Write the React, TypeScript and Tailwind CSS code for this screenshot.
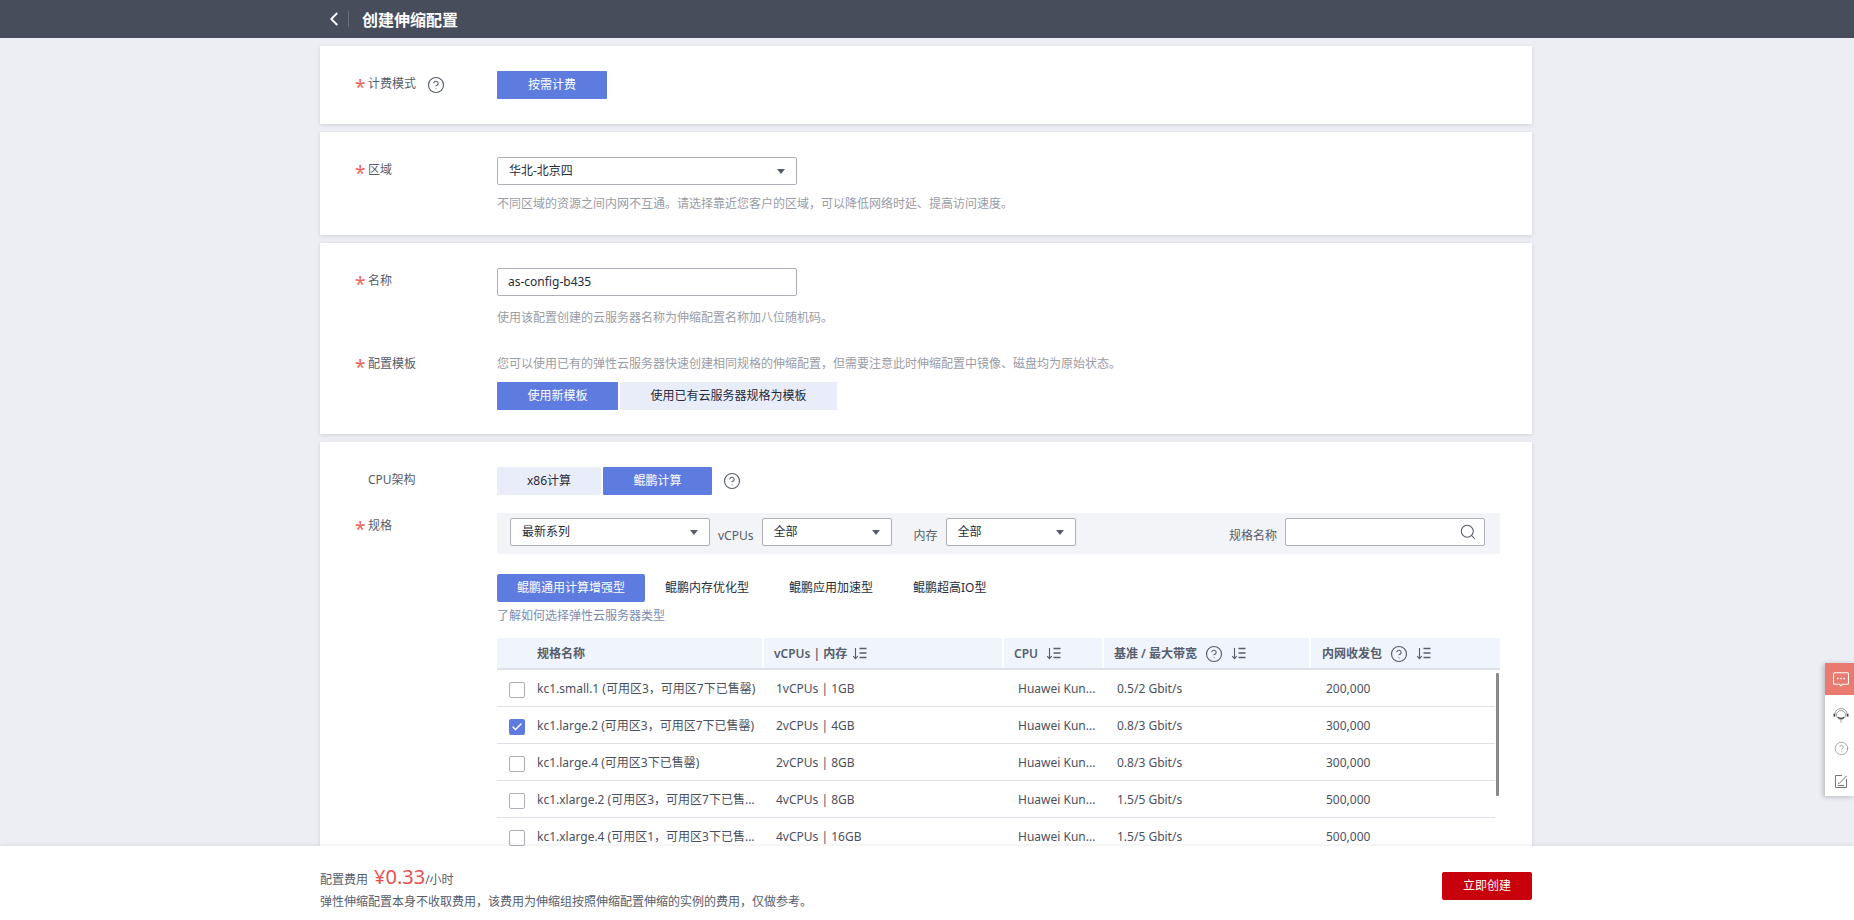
import { ChevronLeft, CircleHelp, Search, Check } from "lucide-react";
import type { ReactNode } from "react";

const Star = () => <span className="w-3 text-[#f4625c] text-[19px] leading-none shrink-0 pt-[7px] -ml-px">*</span>;

function Label({ text, required = true, children }: { text: string; required?: boolean; children?: ReactNode }) {
  return (
    <div className="w-[177px] shrink-0 pl-9 flex items-center h-7 pb-[2px] text-[12px] text-[#575d6c]">
      {required ? <Star /> : <span className="w-[11px] shrink-0" />}
      <span className="ml-px">{text}</span>
      {children}
    </div>
  );
}

const Help = ({ className = "" }: { className?: string }) => (
  <CircleHelp size={18} strokeWidth={1.5} className={`text-[#575d6c] shrink-0 ${className}`} />
);

function Caret() {
  return <span className="w-0 h-0 border-x-[4px] border-x-transparent border-t-[5px] border-t-[#575d6c] shrink-0" />;
}

function Select({ value, className }: { value: string; className: string }) {
  return (
    <div className={`h-7 flex items-center justify-between bg-white border border-[#adb0b8] rounded-[2px] pr-[11px] text-[12px] text-[#252b3a] ${className}`}>
      <span>{value}</span>
      <Caret />
    </div>
  );
}

function Btn({ text, active, className = "" }: { text: string; active?: boolean; className?: string }) {
  return (
    <div className={`h-7 flex items-center justify-center text-[12px] rounded-[1px] ${active ? "bg-[#5e7ce0] text-white" : "bg-[#e9edfa] text-[#252b3a]"} ${className}`}>
      {text}
    </div>
  );
}

function Sort({ className = "" }: { className?: string }) {
  return (
    <svg width="15" height="13" viewBox="0 0 15 13" fill="none" stroke="#575d6c" strokeWidth="1.1" className={`shrink-0 ${className}`}>
      <path d="M3.5 1v10.5M1.2 9.2l2.3 2.4 2.3-2.4" />
      <path d="M7.5 1.5h7M7.5 6h7M7.5 10.5h7" strokeWidth="1.3" />
    </svg>
  );
}

const rows = [
  ["kc1.small.1 (可用区3，可用区7下已售罄)", "1vCPUs | 1GB", "0.5/2 Gbit/s", "200,000", false],
  ["kc1.large.2 (可用区3，可用区7下已售罄)", "2vCPUs | 4GB", "0.8/3 Gbit/s", "300,000", true],
  ["kc1.large.4 (可用区3下已售罄)", "2vCPUs | 8GB", "0.8/3 Gbit/s", "300,000", false],
  ["kc1.xlarge.2 (可用区3，可用区7下已售...", "4vCPUs | 8GB", "1.5/5 Gbit/s", "500,000", false],
  ["kc1.xlarge.4 (可用区1，可用区3下已售...", "4vCPUs | 16GB", "1.5/5 Gbit/s", "500,000", false],
] as const;

function Card({ children, className = "" }: { children: ReactNode; className?: string }) {
  return <section className={`bg-white shadow-[0_1px_4px_rgba(0,0,0,0.12)] pt-[25px] ${className}`}>{children}</section>;
}

export default function App() {
  return (
    <div
      className="relative h-[920px] overflow-hidden bg-[#eceef4] text-[12px]"
      style={{ fontFamily: '"Noto Sans", "Noto Sans CJK SC", sans-serif' }}
    >
      <header className="h-[38px] bg-[#484d5b] flex items-center pl-[323px]">
        <ChevronLeft size={22} strokeWidth={2} className="text-white" />
        <span className="w-px h-4 bg-[#6a6f7c] ml-[3px] mr-[13px]" />
        <h1 className="text-[16px] font-bold text-white leading-none pt-[2px]">创建伸缩配置</h1>
      </header>

      <main className="w-[1212px] ml-[320px] mt-2 flex flex-col gap-2">
        <Card className="h-[78px] flex">
          <Label text="计费模式">
            <Help className="ml-[11px] mt-[2px]" />
          </Label>
          <Btn text="按需计费" active className="w-[110px]" />
        </Card>

        <Card className="h-[103px] flex">
          <Label text="区域" />
          <div>
            <Select value="华北-北京四" className="w-[300px] pl-[11px]" />
            <p className="mt-[10px] text-[12px] leading-[18px] text-[#9a9ca6]">
              不同区域的资源之间内网不互通。请选择靠近您客户的区域，可以降低网络时延、提高访问速度。
            </p>
          </div>
        </Card>

        <Card className="h-[191px]">
          <div className="flex">
            <Label text="名称" />
            <div>
              <div className="w-[300px] h-7 border border-[#adb0b8] rounded-[2px] flex items-center pl-[10px] text-[#252b3a]">as-config-b435</div>
              <p className="mt-[13px] leading-[18px] text-[#9a9ca6]">使用该配置创建的云服务器名称为伸缩配置名称加八位随机码。</p>
            </div>
          </div>
          <div className="flex mt-[24px]">
            <Label text="配置模板" />
            <div className="pt-[4px]">
              <p className="leading-[18px] text-[#9a9ca6]">您可以使用已有的弹性云服务器快速创建相同规格的伸缩配置，但需要注意此时伸缩配置中镜像、磁盘均为原始状态。</p>
              <div className="flex gap-[2px] mt-[9px]">
                <Btn text="使用新模板" active className="w-[121px]" />
                <Btn text="使用已有云服务器规格为模板" className="w-[217px]" />
              </div>
            </div>
          </div>
        </Card>

        <Card className="h-[500px] pt-6">
          <div className="flex">
            <Label text="CPU架构" required={false} />
            <div className="flex items-center">
              <Btn text="x86计算" className="w-[104px]" />
              <Btn text="鲲鹏计算" active className="w-[109px] ml-[2px]" />
              <Help className="ml-[11px]" />
            </div>
          </div>

          <div className="flex mt-[18px]">
            <Label text="规格" />
            <div className="w-[1003px]">
              <div className="h-[41px] bg-[#f3f4f7] flex items-start pt-[5px] pl-[13px] pr-[15px]">
                <Select value="最新系列" className="w-[200px] pl-[11px]" />
                <span className="ml-2 mr-[9px] mt-[9px] text-[#575d6c]">vCPUs</span>
                <Select value="全部" className="w-[130px] pl-[10px]" />
                <span className="ml-[21px] mr-[9px] mt-[9px] text-[#575d6c]">内存</span>
                <Select value="全部" className="w-[130px] pl-[10px]" />
                <span className="ml-auto mr-2 mt-[9px] text-[#575d6c]">规格名称</span>
                <div className="w-[200px] h-7 bg-white border border-[#adb0b8] rounded-[2px] flex items-center justify-end pr-[7px]">
                  <Search size={18} strokeWidth={1.4} className="text-[#575d6c]" />
                </div>
              </div>

              <div className="flex items-center mt-5 h-7 text-[#252b3a]">
                <Btn text="鲲鹏通用计算增强型" active className="w-[148px] rounded-[2px]" />
                <span className="ml-5">鲲鹏内存优化型</span>
                <span className="ml-10">鲲鹏应用加速型</span>
                <span className="ml-10">鲲鹏超高IO型</span>
              </div>
              <p className="mt-[5px] leading-[18px] text-[#7c8bb0]">了解如何选择弹性云服务器类型</p>

              <div className="grid grid-cols-[267px_240px_100px_207px_189px] mt-[13px] h-[32px] bg-[#f0f4fc] border-b-2 border-[#dfe1e8] text-[#575d6c] font-semibold items-center">
                <div className="h-full flex items-center pl-10 pt-px border-r-2 border-white">规格名称</div>
                <div className="h-full flex items-center pl-[10px] pt-px border-r-2 border-white">
                  vCPUs | 内存<Sort className="ml-[5px]" />
                </div>
                <div className="h-full flex items-center pl-[10px] pt-px border-r-2 border-white">
                  CPU<Sort className="ml-[8px]" />
                </div>
                <div className="h-full flex items-center pl-[10px] pt-px border-r-2 border-white">
                  基准 / 最大带宽<Help className="ml-2" /><Sort className="ml-2" />
                </div>
                <div className="h-full flex items-center pl-[11px] pt-px">
                  内网收发包<Help className="ml-2" /><Sort className="ml-2" />
                </div>
              </div>

              <div className="relative">
                {rows.map(([name, spec, bw, pps, checked]) => (
                  <div key={name} className="grid grid-cols-[267px_240px_100px_207px_184px] w-[998px] h-[37px] pt-[2px] items-center border-b border-[#dfe1e8] text-[#4b505e]">
                    <div className="flex items-center pl-3">
                      {checked ? (
                        <span className="w-4 h-4 mt-px rounded-[2px] bg-[#5e7ce0] flex items-center justify-center shrink-0">
                          <Check size={12} strokeWidth={3} className="text-white" />
                        </span>
                      ) : (
                        <span className="w-4 h-4 mt-px rounded-[2px] border border-[#adb0b8] bg-white shrink-0" />
                      )}
                      <span className="ml-3 whitespace-nowrap">{name}</span>
                    </div>
                    <div className="pl-3">{spec}</div>
                    <div className="pl-[14px] whitespace-nowrap">Huawei Kun...</div>
                    <div className="pl-[13px]">{bw}</div>
                    <div className="pl-[15px]">{pps}</div>
                  </div>
                ))}
                <div className="absolute top-[3px] left-[999px] w-[3px] h-[123px] bg-[#8a8a8a] rounded-[1px]" />
              </div>
            </div>
          </div>
        </Card>
      </main>

      <aside className="absolute right-0 top-[663px] w-[29px] bg-white shadow-[-2px_1px_5px_rgba(0,0,0,0.22)]">
        <div className="h-[32px] bg-[#e87a70] flex items-center justify-center pl-[3px]">
          <svg width="16" height="15" viewBox="0 0 16 15" fill="none" stroke="#fff" strokeWidth="1.1">
            <path d="M1.5.8h13a1 1 0 0 1 1 1v9.4a1 1 0 0 1-1 1H9.5L8 13.8l-1.5-1.6h-5a1 1 0 0 1-1-1V1.800a1 1 0 0 1 1-1z" />
            <path d="M4 6.500h1.600M7.200 6.500h1.600M10.400 6.500H12" strokeWidth="1.500" />
          </svg>
        </div>
        <div className="h-[41px] flex items-center justify-center pl-[3px]">
          <svg width="18" height="17" viewBox="0 0 18 17" fill="none" stroke="#888" strokeWidth="0.8">
            <path d="M3 7a6 5.500 0 0 1 12 0" />
            <circle cx="9" cy="8" r="4.500" />
            <path d="M6 10.200c1.800 1.300 4.200 1.300 6 0" strokeWidth="1.200" stroke="#444" />
            <rect x="1.500" y="6.800" width="1.800" height="2.800" fill="#444" stroke="none" />
            <rect x="14.700" y="6.800" width="1.800" height="2.800" fill="#444" stroke="none" />
            <path d="M9 13v2.500" />
          </svg>
        </div>
        <div className="h-[24px] flex items-center justify-center pl-[3px]">
          <CircleHelp size={15} strokeWidth={1} className="text-[#777]" />
        </div>
        <div className="h-[36px] flex items-center justify-center pl-[3px] pt-[6px]">
          <svg width="14" height="15" viewBox="0 0 14 15" fill="none" stroke="#777" strokeWidth="1">
            <path d="M8 1.500H1.500v12h11V5" />
            <path d="M4 9.500l1.500-.300L12.500 2" />
            <path d="M4 11.500h6" />
          </svg>
        </div>
      </aside>

      <footer className="absolute left-0 right-0 bottom-0 h-[74px] bg-white shadow-[0_-1px_4px_rgba(0,0,0,0.08)] flex justify-between pl-[320px] pr-[322px]">
        <div>
          <div className="h-[31px] mt-[19px] flex items-baseline text-[#575d6c]">
            <span>配置费用</span>
            <span className="ml-[6px] text-[20px] leading-[24px] text-[#e8504f]">¥0.33</span>
            <span>/小时</span>
          </div>
          <p className="leading-[18px] -mt-[3px] text-[#575d6c]">弹性伸缩配置本身不收取费用，该费用为伸缩组按照伸缩配置伸缩的实例的费用，仅做参考。</p>
        </div>
        <div className="w-[90px] h-7 mt-[26px] bg-[#c7000b] rounded-[2px] text-white flex items-center justify-center">立即创建</div>
      </footer>
    </div>
  );
}
